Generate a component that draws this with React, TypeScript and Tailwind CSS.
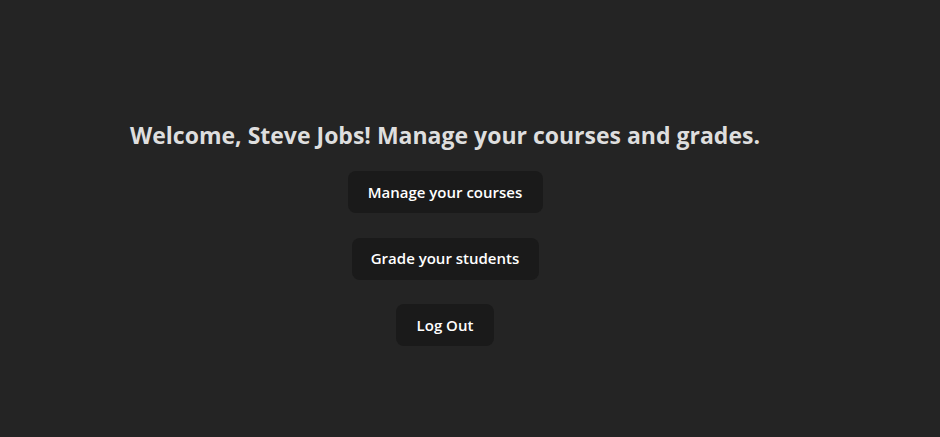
export default function App() {
  const buttons = [
    { label: 'Manage your courses', w: 'w-[195px]' },
    { label: 'Grade your students', w: 'w-[187px]' },
    { label: 'Log Out', w: 'w-[98px]' },
  ];

  return (
    <div
      className="flex h-[437px] w-full flex-col items-center bg-[#242424] pr-[50px] pt-[120px] text-[#dedede]"
      style={{ fontFamily: '"Open Sans", "Noto Sans", sans-serif' }}
    >
      <h1 className="text-[23px] font-bold leading-[30px]">
        Welcome, Steve Jobs! Manage your courses and grades.
      </h1>

      <div className="mt-[21px] flex flex-col items-center gap-[24.5px]">
        {buttons.map((b) => (
          <button
            key={b.label}
            className={`${b.w} h-[42px] rounded-lg bg-[#1a1a1a] text-[15px] font-semibold text-white`}
          >
            {b.label}
          </button>
        ))}
      </div>
    </div>
  );
}
